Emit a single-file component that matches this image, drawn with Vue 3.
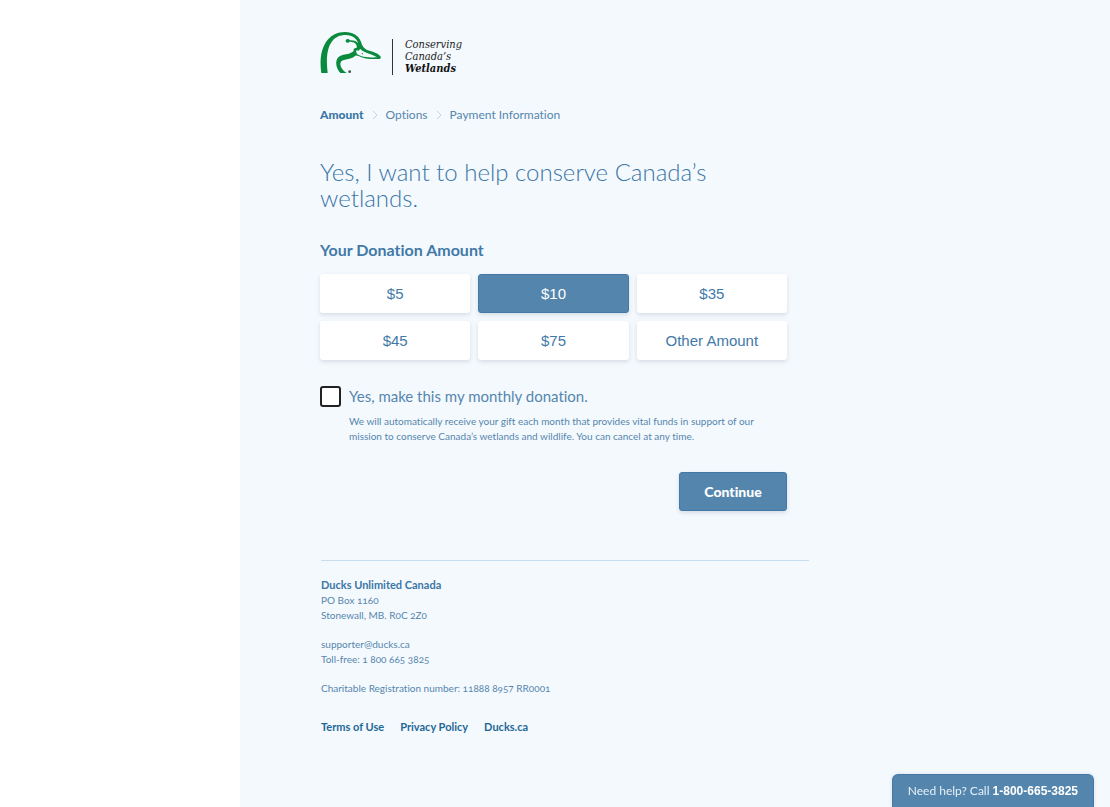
<script setup>
import { ref } from 'vue'

const steps = ['Amount', 'Options', 'Payment Information']
const amounts = ['$5', '$10', '$35', '$45', '$75', 'Other Amount']
const selected = ref('$10')
const monthly = ref(false)
</script>

<template>
  <div class="page">
    <div class="side"></div>
    <main class="main">
      <div class="content">
        <header class="brand">
          <svg class="duck" viewBox="0 0 186 126" aria-hidden="true">
            <path
              fill="#0a8a3c"
              d="M4 123 C-4 72 8 25 44 7 C66 -4 96 -1 111 12 C119 19 123 28 126 38 C130 48 139 54 151 57 C164 61 177 66 182 74 C184 78 181 81 176 81 C153 82 132 81 117 73 C111 69 107 70 102 74 C91 83 73 80 64 88 C57 96 62 111 80 123 L61 123 C48 109 44 88 55 76 C63 67 76 68 87 65 C96 62 102 59 101 54 C99 50 104 48 110 47 C112 37 104 30 92 29 L89 29 C85 34 77 32 77 27 C77 20 87 19 89 25 C101 24 109 28 115 34 C110 20 99 10 77 9 C37 9 13 43 23 123 Z M110 54 C108 58 108 62 111 65 C121 75 148 77 171 76 C158 66 132 63 120 50 C118 57 113 57 110 54 Z"
              fill-rule="evenodd"
            />
            <circle cx="127" cy="65" r="2" fill="#0a8a3c" />
            <circle cx="89" cy="119" r="4" fill="#345244" />
          </svg>
          <p class="tagline">Conserving<br />Canada’s<br /><strong>Wetlands</strong></p>
        </header>

        <nav aria-label="Donation steps">
          <ol class="steps">
            <li v-for="(step, i) in steps" :key="step" :class="{ current: i === 0 }">
              <svg v-if="i > 0" viewBox="0 0 6 10" aria-hidden="true">
                <path d="M1 1 L5 5 L1 9" fill="none" stroke="#c9d3da" />
              </svg>
              <span>{{ step }}</span>
            </li>
          </ol>
        </nav>

        <form class="form" @submit.prevent>
          <h1>Yes, I want to help conserve Canada’s wetlands.</h1>
          <h2>Your Donation Amount</h2>
          <div class="amounts">
            <button
              v-for="amount in amounts"
              :key="amount"
              type="button"
              :class="{ active: selected === amount }"
              :aria-pressed="selected === amount"
              @click="selected = amount"
            >
              {{ amount }}
            </button>
          </div>

          <div class="monthly">
            <input id="monthly" v-model="monthly" type="checkbox" aria-describedby="monthly-note" />
            <label for="monthly">Yes, make this my monthly donation.</label>
            <p id="monthly-note">
              We will automatically receive your gift each month that provides vital funds in
              support of our mission to conserve Canada’s wetlands and wildlife. You can cancel at
              any time.
            </p>
          </div>

          <button class="continue" type="submit">Continue</button>
        </form>

        <footer class="footer">
          <address>
            <p><strong>Ducks Unlimited Canada</strong><br />PO Box 1160<br />Stonewall, MB. R0C 2Z0</p>
            <p>supporter@ducks.ca<br />Toll-free: 1 800 665 3825</p>
            <p>Charitable Registration number: 11888 8957 RR0001</p>
          </address>
          <nav class="links" aria-label="Footer">
            <a href="#">Terms of Use</a>
            <a href="#">Privacy Policy</a>
            <a href="#">Ducks.ca</a>
          </nav>
        </footer>
      </div>
    </main>
    <aside class="help">Need help? Call <strong>1-800-665-3825</strong></aside>
  </div>
</template>

<style>
body {
  margin: 0;
}
</style>

<style scoped>
.page {
  display: flex;
  min-height: 100vh;
  background: #fff;
  font-family: Lato, 'Open Sans', sans-serif;
  font-variant-ligatures: none;
  color: #5486ad;
}
h1,
h2,
p,
ol {
  margin: 0;
  padding: 0;
}
.side {
  flex: 0 0 240px;
}
.main {
  flex: 1;
  box-sizing: border-box;
  padding: 32px 80px 64px;
  background: #f4f9fe;
}
.content {
  max-width: 489px;
}
.brand {
  display: flex;
  align-items: flex-start;
}
.duck {
  width: 62px;
  height: 42px;
}
.tagline {
  margin: 7px 0 0 10px;
  padding-left: 12px;
  border-left: 1px solid #333;
  font: italic 11px/12px 'DejaVu Serif Condensed', 'DejaVu Serif', serif;
  color: #222;
}
.tagline strong {
  color: #111;
}
.steps {
  display: flex;
  margin-top: 32px;
  list-style: none;
  font-size: 12px;
  line-height: 16px;
}
.steps li {
  display: flex;
  align-items: center;
}
.steps svg {
  width: 6px;
  height: 10px;
  margin: 0 8px;
}
.steps .current {
  font-weight: 900;
  color: #3b76a5;
}
.form {
  max-width: 467px;
}
h1 {
  margin-top: 36px;
  font-size: 24px;
  line-height: 26px;
  font-weight: 300;
  color: #3b76a5;
}
h2 {
  margin-top: 29px;
  font-size: 16px;
  line-height: 20px;
  font-weight: 700;
  color: #4279a7;
}
.amounts {
  display: grid;
  grid-template-columns: repeat(3, 1fr);
  gap: 8px;
  margin-top: 14px;
}
.amounts button {
  height: 39px;
  padding: 0;
  border: 0;
  border-radius: 3px;
  background: #fff;
  box-shadow: 0 2px 4px rgba(60, 80, 100, 0.16);
  font: 15px 'Liberation Sans', sans-serif;
  color: #4279a7;
}
.amounts .active {
  border: 1px solid #4279a7;
  background: #5486ad;
  color: #fff;
}
.monthly {
  display: grid;
  grid-template-columns: 21px 1fr;
  column-gap: 8px;
  align-items: start;
  margin-top: 26px;
}
.monthly input {
  appearance: none;
  box-sizing: border-box;
  width: 21px;
  height: 21px;
  margin: 0;
  border: 2px solid #222;
  border-radius: 3px;
  background: #fff;
}
.monthly input:checked {
  background: #5486ad;
}
.monthly label {
  font-size: 15px;
  line-height: 20px;
}
.monthly p {
  grid-column: 2;
  margin-top: 7px;
  font-size: 10px;
  line-height: 15px;
}
.continue {
  display: block;
  width: 108px;
  height: 39px;
  margin: 28px 0 0 auto;
  border: 1px solid #4279a7;
  border-radius: 3px;
  background: #5486ad;
  box-shadow: 0 2px 4px rgba(60, 80, 100, 0.16);
  font: 900 14px Lato, sans-serif;
  font-variant-ligatures: none;
  color: #fff;
}
.footer {
  margin: 49px 0 0 1px;
  padding-top: 16px;
  border-top: 1px solid #c8deee;
  font-size: 10px;
  line-height: 15px;
}
address {
  font-style: normal;
  font-variant-numeric: oldstyle-nums;
}
address p + p {
  margin-top: 14px;
}
address strong {
  font-size: 11px;
  font-weight: 700;
  color: #3b76a5;
}
.links {
  display: flex;
  gap: 16px;
  margin-top: 23px;
  font-size: 11px;
}
.links a {
  font-weight: 700;
  color: #1f6896;
  text-decoration: none;
}
.help {
  position: fixed;
  right: 16px;
  bottom: 0;
  padding: 8px 15px;
  border: 1px solid #4279a7;
  border-bottom: 0;
  border-radius: 6px 6px 0 0;
  background: #5486ad;
  box-shadow: 0 0 4px rgba(60, 80, 100, 0.14);
  font-size: 12px;
  line-height: 16px;
  color: #e6f0f8;
}
.help strong {
  font-family: 'Liberation Sans', sans-serif;
  color: #fff;
}
</style>
